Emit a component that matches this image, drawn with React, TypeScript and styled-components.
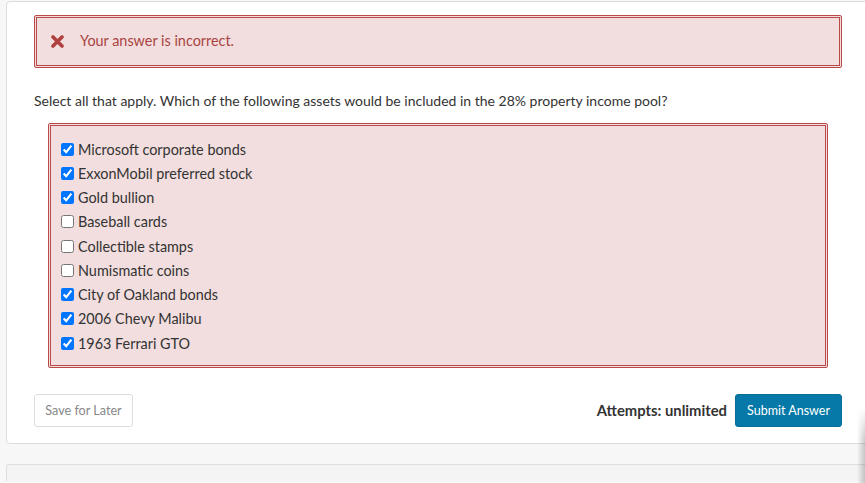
import React from "react";
import styled, { createGlobalStyle } from "styled-components";

const Global = createGlobalStyle`
  html, body { margin: 0; padding: 0; }
  body {
    background: #f7f7f7;
    font-family: Lato, "Open Sans", "Liberation Sans", sans-serif;
    color: #333;
    overflow: hidden;
    width: 865px;
    height: 483px;
    position: relative;
  }
`;

const Page = styled.div`
  padding: 1px 0 0 6px;
`;

const Card = styled.div`
  width: 865px;
  background: #fff;
  border: 1px solid #dcdcdc;
  border-radius: 4px;
  padding: 13px 28px 16px 27px;
  box-sizing: border-box;
`;

const Alert = styled.div`
  display: flex;
  align-items: center;
  gap: 16px;
  border: 3px double #b94a48;
  border-radius: 2px;
  background: #f2dede;
  color: #a94442;
  font-size: 14.4px;
  line-height: 20px;
  padding: 13px 14px 14px 14px;
`;

const Question = styled.p`
  margin: 23px 0 0 0;
  font-size: 14px;
  line-height: 20px;
  color: #333;
`;

const Options = styled.div`
  margin: 12px 14px 0 14px;
  border: 3px double #b94a48;
  border-radius: 2px;
  background: #f2dede;
  padding: 11px 10px 10px 10px;
  display: flex;
  flex-direction: column;
`;

const Option = styled.label`
  display: flex;
  align-items: center;
  height: 24.25px;
  font-size: 14.4px;
  color: #333;
`;

const Check = styled.input`
  width: 13px;
  height: 13px;
  margin: 0 4px 0 0;
`;

const Footer = styled.div`
  display: flex;
  align-items: center;
  margin-top: 26px;
`;

const SaveButton = styled.button`
  font-family: inherit;
  font-size: 12.6px;
  color: #888;
  background: #fff;
  border: 1px solid #ddd;
  border-radius: 3px;
  height: 33px;
  width: 99px;
  padding: 0;
`;

const Spacer = styled.div`
  flex: 1;
`;

const Attempts = styled.span`
  font-weight: 700;
  font-size: 14.8px;
  color: #333;
  margin-right: 8px;
  position: relative;
  top: -1px;
`;

const SubmitButton = styled.button`
  font-family: inherit;
  font-size: 12.5px;
  color: #fff;
  background: #0679a8;
  border: 1px solid #066e99;
  border-radius: 3px;
  height: 33px;
  width: 107px;
  padding: 0;
`;

const Lower = styled.div`
  margin-top: 20px;
  height: 16px;
  background: #f4f4f4;
  border: 1px solid #dedede;
  border-bottom: none;
  border-radius: 3px 3px 0 0;
  width: 870px;
`;

const EdgeShadow = styled.div`
  position: absolute;
  right: 0;
  top: 408px;
  width: 8px;
  height: 75px;
  background: linear-gradient(to right, rgba(0,0,0,0), rgba(0,0,0,0.2));
  -webkit-mask-image: linear-gradient(to bottom, rgba(0,0,0,0), #000 30px);
  mask-image: linear-gradient(to bottom, rgba(0,0,0,0), #000 30px);
`;

const XIcon = () => (
  <svg width="13" height="13" viewBox="0 0 13 13">
    <path d="M2 2 L11 11 M11 2 L2 11" stroke="#b0403e" strokeWidth="3.6" strokeLinecap="round" />
  </svg>
);

const items: [string, boolean][] = [
  ["Microsoft corporate bonds", true],
  ["ExxonMobil preferred stock", true],
  ["Gold bullion", true],
  ["Baseball cards", false],
  ["Collectible stamps", false],
  ["Numismatic coins", false],
  ["City of Oakland bonds", true],
  ["2006 Chevy Malibu", true],
  ["1963 Ferrari GTO", true],
];

export default function App() {
  return (
    <>
      <Global />
      <Page>
        <Card>
          <Alert>
            <XIcon />
            <span>Your answer is incorrect.</span>
          </Alert>
          <Question>
            Select all that apply. Which of the following assets would be included in the 28% property income pool?
          </Question>
          <Options>
            {items.map(([t, c]) => (
              <Option key={t}>
                <Check type="checkbox" defaultChecked={c} />
                {t}
              </Option>
            ))}
          </Options>
          <Footer>
            <SaveButton>Save for Later</SaveButton>
            <Spacer />
            <Attempts>Attempts: unlimited</Attempts>
            <SubmitButton>Submit Answer</SubmitButton>
          </Footer>
        </Card>
        <Lower />
      </Page>
      <EdgeShadow />
    </>
  );
}
